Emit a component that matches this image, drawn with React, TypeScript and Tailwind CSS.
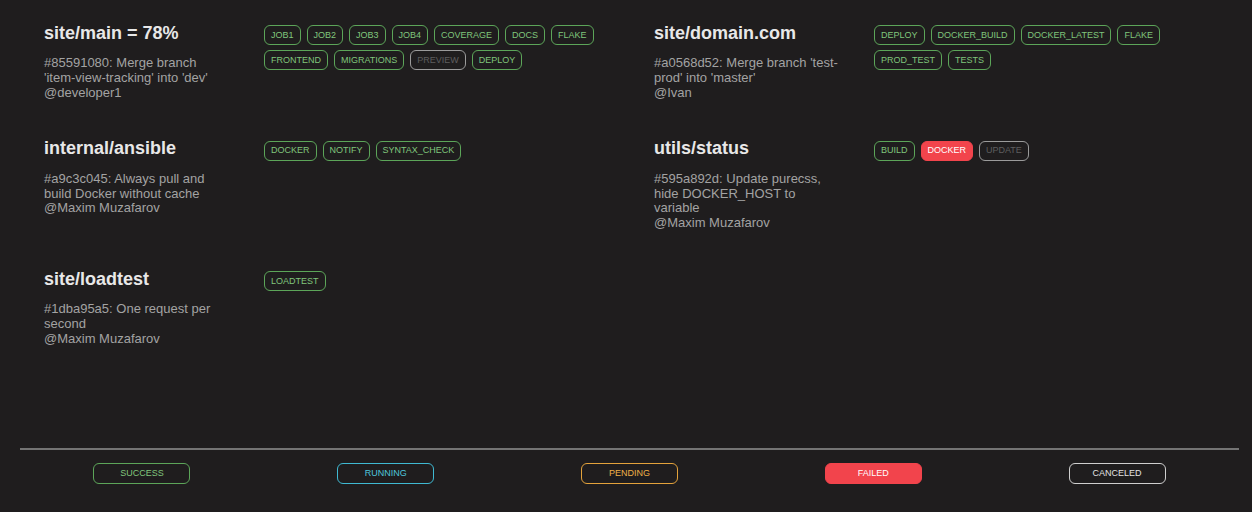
import React from "react";

type Status = "success" | "running" | "pending" | "failed" | "canceled" | "skipped";

const projects: {
    name: string;
    commit: string;
    message: string;
    author: string;
    jobs: [string, Status][];
}[] = [
    {
        name: "site/main = 78%",
        commit: "85591080",
        message: "Merge branch 'item-view-tracking' into 'dev'",
        author: "developer1",
        jobs: [
            ["JOB1", "success"],
            ["JOB2", "success"],
            ["JOB3", "success"],
            ["JOB4", "success"],
            ["COVERAGE", "success"],
            ["DOCS", "success"],
            ["FLAKE", "success"],
            ["FRONTEND", "success"],
            ["MIGRATIONS", "success"],
            ["PREVIEW", "skipped"],
            ["DEPLOY", "success"],
        ],
    },
    {
        name: "site/domain.com",
        commit: "a0568d52",
        message: "Merge branch 'test-prod' into 'master'",
        author: "Ivan",
        jobs: [
            ["DEPLOY", "success"],
            ["DOCKER_BUILD", "success"],
            ["DOCKER_LATEST", "success"],
            ["FLAKE", "success"],
            ["PROD_TEST", "success"],
            ["TESTS", "success"],
        ],
    },
    {
        name: "internal/ansible",
        commit: "a9c3c045",
        message: "Always pull and build Docker without cache",
        author: "Maxim Muzafarov",
        jobs: [
            ["DOCKER", "success"],
            ["NOTIFY", "success"],
            ["SYNTAX_CHECK", "success"],
        ],
    },
    {
        name: "utils/status",
        commit: "595a892d",
        message: "Update purecss, hide DOCKER_HOST to variable",
        author: "Maxim Muzafarov",
        jobs: [
            ["BUILD", "success"],
            ["DOCKER", "failed"],
            ["UPDATE", "skipped"],
        ],
    },
    {
        name: "site/loadtest",
        commit: "1dba95a5",
        message: "One request per second",
        author: "Maxim Muzafarov",
        jobs: [["LOADTEST", "success"]],
    },
];

const tagStyle: Record<Status, string> = {
    success: "border-[#5ca559] text-[#80c67c]",
    running: "border-[#3fb9d2] text-[#4fc6dc]",
    pending: "border-[#e3a23b] text-[#eeb048]",
    failed: "border-[#f2444c] bg-[#f2444c] text-white",
    canceled: "border-[#cfcfcf] text-[#e2e2e2]",
    skipped: "border-[#9b9b9b] text-[#5e5e5e]",
};

const legend: [string, Status][] = [
    ["SUCCESS", "success"],
    ["RUNNING", "running"],
    ["PENDING", "pending"],
    ["FAILED", "failed"],
    ["CANCELED", "canceled"],
];

export default function App() {
    return (
        <div className="h-[512px] flex flex-col bg-[#1f1d1e] font-['Liberation_Sans',Arial,sans-serif] overflow-hidden">
            <div className="grid grid-cols-[610px_1fr] gap-y-[37px] pl-[44px] pt-[21.5px] items-start">
                {projects.map((p) => (
                    <div key={p.name} className="flex items-start">
                        {/* Project info */}
                        <div className="w-[185.5px] mr-[34.5px] shrink-0">
                            <h2 className="text-[18px] leading-[22px] font-bold text-[#e8e8e8]">{p.name}</h2>
                            <p className="mt-[12.5px] text-[13px] leading-[14.75px] text-[#a3a3a3]">
                                #{p.commit}: {p.message}
                                <br />@{p.author}
                            </p>
                        </div>

                        {/* Jobs */}
                        <div className="w-[342px] mt-[3.5px] flex flex-wrap gap-x-[6px] gap-y-[5px]">
                            {p.jobs.map(([job, status]) => (
                                <span
                                    key={job}
                                    className={`h-[20px] px-[6px] flex items-center rounded-[6px] border text-[9px] leading-none ${tagStyle[status]}`}
                                >
                                    {job}
                                </span>
                            ))}
                        </div>
                    </div>
                ))}
            </div>

            {/* Legend */}
            <div className="mt-auto ml-[20px] w-[1219px] border-t-2 border-[#747474] pt-[13px] pb-[28px] grid grid-cols-5">
                {legend.map(([label, status]) => (
                    <div key={label} className="flex justify-center">
                        <span
                            className={`w-[97px] h-[21px] flex items-center justify-center rounded-[6px] border text-[9px] leading-none ${tagStyle[status]}`}
                        >
                            {label}
                        </span>
                    </div>
                ))}
            </div>
        </div>
    );
}
